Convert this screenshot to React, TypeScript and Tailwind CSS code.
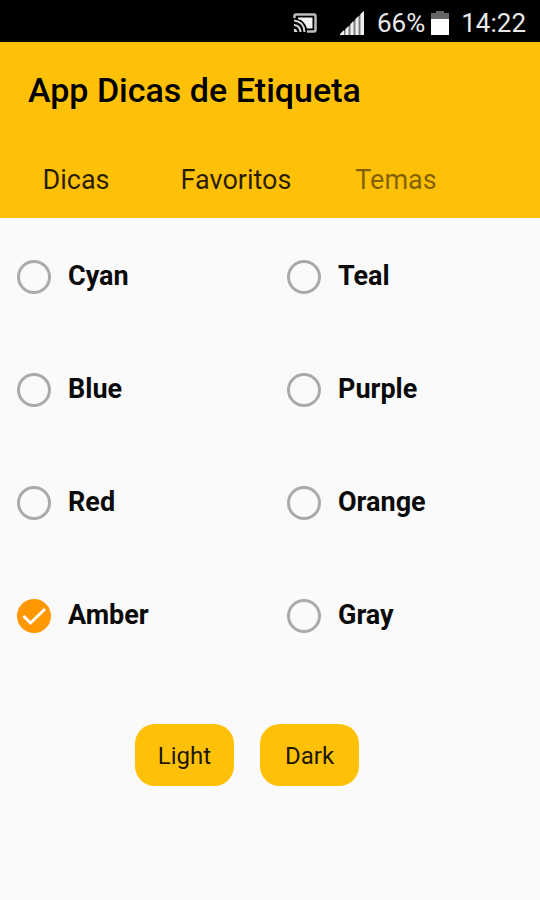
import { useState } from "react";

const themes = ["Cyan", "Teal", "Blue", "Purple", "Red", "Orange", "Amber", "Gray"];

function StatusBar() {
    return (
        <div className="flex h-[42px] items-center justify-end bg-black pt-1 pr-[14px] text-[26px] leading-none text-[#e8e8e8]">
            <svg className="mr-[22px] h-5 w-6" viewBox="0 0 24 20" fill="none" stroke="#bdbdbd" strokeWidth="2.500">
                <path d="M1.500 5V3Q1.500 1.500 3 1.500H21Q22.500 1.500 22.500 3V17Q22.500 18.500 21 18.500H14" />
                <path d="M5 4.500H19.500V15.500H14Q12 8 5 6Z" fill="#f4f4f4" stroke="none" />
                <path d="M1 7.500Q11 8.500 11.500 19M1 12Q7 12.500 7.500 19" stroke="#d8d8d8" strokeWidth="2" />
                <path d="M1 15.500Q4 16 4.500 19H1Z" fill="#d8d8d8" stroke="none" />
            </svg>
            <svg className="mr-3 h-[26px] w-[26px]" viewBox="0 0 26 26">
                <path d="M1 25L25 1V25Z" fill="#7d7d7d" />
                <path d="M1 25V24L5 20V25ZM6.500 25V19L9.500 16V25ZM11.500 25V14L14.500 11V25ZM16.500 25V9L19.500 6V25ZM21.500 25V4L25 1V25Z" fill="#f0f0f0" />
            </svg>
            <span>66%</span>
            <svg className="mr-3 ml-[6px] h-[26px] w-[18px]" viewBox="0 0 18 26">
                <path d="M0 3H5V1H13V3H18V9H0Z" fill="#666" />
                <path d="M0 9H18V25H0Z" fill="#fff" />
            </svg>
            <span>14:22</span>
        </div>
    );
}

function Header() {
    return (
        <header className="bg-[#ffc107] text-black">
            <h1 className="px-7 pt-6 text-[34px] leading-12 font-medium">App Dicas de Etiqueta</h1>
            <nav className="mt-6 flex h-20 items-center pt-1 text-center text-[27px] text-black/85">
                <a href="#dicas" className="w-38">Dicas</a>
                <a href="#favoritos" className="w-42">Favoritos</a>
                <a href="#temas" aria-current="page" className="w-38 text-black/50">Temas</a>
            </nav>
        </header>
    );
}

function ThemeOption({ name, checked, onSelect }: { name: string; checked: boolean; onSelect: () => void }) {
    return (
        <label className="flex h-[113px] items-center gap-[17px] pl-[17px] text-[27px] font-bold text-[#0a0a0a]">
            <span className="relative h-[34px] w-[34px]">
                <input
                    type="radio"
                    name="theme"
                    checked={checked}
                    onChange={onSelect}
                    className="block h-[34px] w-[34px] appearance-none rounded-full border-3 border-[#aaaaaa] checked:border-[#ff9800] checked:bg-[#ff9800]"
                />
                {checked && (
                    <svg className="pointer-events-none absolute inset-0" viewBox="0 0 34 34" fill="none" stroke="#fff" strokeWidth="3">
                        <path d="M6.500 17L13.500 24L28 10" />
                    </svg>
                )}
            </span>
            {name}
        </label>
    );
}

function App() {
    const [theme, setTheme] = useState("Amber");

    return (
        <div className="min-h-screen bg-[#fafafa] font-[Roboto,sans-serif]">
            <StatusBar />
            <Header />
            <main>
                <div className="grid grid-cols-2 pt-0.5">
                    {themes.map((name) => (
                        <ThemeOption key={name} name={name} checked={theme === name} onSelect={() => setTheme(name)} />
                    ))}
                </div>
                <div className="flex justify-center gap-[26px] pt-13 pr-[46px] text-2xl text-black/90">
                    <button type="button" className="h-[62px] w-[99px] rounded-[20px] bg-[#ffc107] pt-0.5">Light</button>
                    <button type="button" className="h-[62px] w-[99px] rounded-[20px] bg-[#ffc107] pt-0.5">Dark</button>
                </div>
            </main>
        </div>
    );
}

export default App;
